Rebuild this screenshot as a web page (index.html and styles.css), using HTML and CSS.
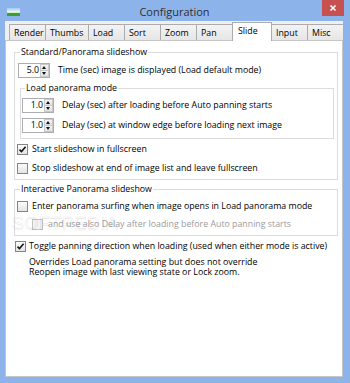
FILE: index.html
```html
<!DOCTYPE html>
<html lang="en">
<head>
  <meta charset="UTF-8" />
  <title>Configuration</title>
  <link rel="stylesheet" href="styles.css">
</head>
<body>

  <div class="window">

    <div class="titlebar">
      <span class="app-icon">
        <svg width="13" height="8" viewBox="0 0 13 8">
          <defs>
            <linearGradient id="sky" x1="0" y1="0" x2="0" y2="1">
              <stop offset="0" stop-color="#9fcbef"/>
              <stop offset="1" stop-color="#eef7fd"/>
            </linearGradient>
          </defs>
          <rect x="0" y="0" width="13" height="4" fill="url(#sky)"/>
          <rect x="0" y="4" width="13" height="1" fill="#d9eecf"/>
          <rect x="0" y="5" width="13" height="3" fill="#3f9f2c"/>
        </svg>
      </span>
      <span class="title">Configuration</span>
      <span class="close">
        <svg width="22" height="16" viewBox="0 0 22 16">
          <path d="M8.5 5.5 L13.5 10.5 M13.5 5.5 L8.5 10.5" stroke="#fff" stroke-width="1.6" fill="none"/>
        </svg>
      </span>
    </div>

    <div class="client">
      <ul class="tabs">
        <li class="tab">Render</li>
        <li class="tab tab-wide">Thumbs</li>
        <li class="tab">Load</li>
        <li class="tab">Sort</li>
        <li class="tab">Zoom</li>
        <li class="tab">Pan</li>
        <li class="tab active">Slide</li>
        <li class="tab">Input</li>
        <li class="tab">Misc</li>
      </ul>

      <div class="page">

        <fieldset class="group">
          <legend>Standard/Panorama slideshow</legend>
          <div class="spin-row">
            <span class="spin"><span class="spin-val">5.0</span><span class="spin-btns"><i class="up"></i><i class="down"></i></span></span>
            <span>Time (sec) image is displayed (Load default mode)</span>
          </div>

          <fieldset class="group inner">
            <legend>Load panorama mode</legend>
            <div class="spin-row">
              <span class="spin"><span class="spin-val">1.0</span><span class="spin-btns"><i class="up"></i><i class="down"></i></span></span>
              <span>Delay (sec) after loading before Auto panning starts</span>
            </div>
            <div class="spin-row next">
              <span class="spin"><span class="spin-val">1.0</span><span class="spin-btns"><i class="up"></i><i class="down"></i></span></span>
              <span>Delay (sec) at window edge before loading next image</span>
            </div>
          </fieldset>

          <div class="check first checked">
            <span class="box"><svg width="9" height="9" viewBox="0 0 9 9"><path d="M1.5 4.6 L3.5 6.6 L7.6 1.8" stroke="#111" stroke-width="1.5" fill="none"/></svg></span>
            <span>Start slideshow in fullscreen</span>
          </div>
          <div class="check second">
            <span class="box"></span>
            <span>Stop slideshow at end of image list and leave fullscreen</span>
          </div>
        </fieldset>

        <fieldset class="group interactive">
          <legend>Interactive Panorama slideshow</legend>
          <div class="check">
            <span class="box"></span>
            <span>Enter panorama surfing when image opens in Load panorama mode</span>
          </div>
          <div class="check sub disabled">
            <span class="box"></span>
            <span>and use also Delay after loading before Auto panning starts</span>
          </div>
        </fieldset>

        <div class="check toggle">
          <span class="box"><svg width="9" height="9" viewBox="0 0 9 9"><path d="M1.5 4.6 L3.5 6.6 L7.6 1.8" stroke="#111" stroke-width="1.5" fill="none"/></svg></span>
          <span>Toggle panning direction when loading (used when either mode is active)</span>
        </div>
        <p class="note">Overrides Load panorama setting but does not override<br>Reopen image with last viewing state or Lock zoom.</p>

        <div class="watermark">SOFTPEDIA</div>
      </div>
    </div>

  </div>

</body>
</html>
```

FILE: styles.css
```css
* {
  margin: 0;
  padding: 0;
  box-sizing: border-box;
}

body {
  width: 350px;
  height: 383px;
  overflow: hidden;
  background: #8cb4ea;
  font-family: 'Open Sans', 'Noto Sans', sans-serif;
  font-size: 8.8px;
  line-height: 11px;
  color: #000;
}

.window {
  height: 383px;
  display: flex;
  flex-direction: column;
  padding: 0 7px 6px 5px;
}

/* title bar */
.titlebar {
  height: 21px;
  display: grid;
  grid-template-columns: 1fr auto 1fr;
  align-items: start;
  margin-right: -1px;
}

.app-icon {
  margin: 8px 0 0 2px;
  height: 8px;
  display: flex;
}

.title {
  font-size: 11px;
  line-height: 21px;
  padding-top: 1px;
  color: #2f2f2f;
}

.close {
  justify-self: end;
  width: 22px;
  height: 16px;
  background: #c75050;
  display: flex;
}

/* client & tabs */
.client {
  flex: 1;
  display: flex;
  flex-direction: column;
  background: #f0f0f0;
}

.tabs {
  list-style: none;
  display: flex;
  align-items: flex-end;
  height: 20px;
  padding-left: 4px;
  margin-bottom: -1px;
  position: relative;
  z-index: 1;
}

.tab {
  width: 37px;
  height: 16px;
  margin: 0 -1px 1px 0;
  padding: 1px 0 0 4px;
  line-height: 14px;
  border: 1px solid #acacac;
  border-bottom: none;
  background: linear-gradient(#f3f3f3, #e6e6e6);
}

.tab-wide {
  width: 44px;
}

.tab.active {
  width: 40px;
  height: 19px;
  margin-bottom: 0;
  padding-left: 5px;
  background: #fff;
  position: relative;
  z-index: 2;
}

.page {
  flex: 1;
  position: relative;
  background: #fff;
  border: 1px solid #c6c6c6;
  padding: 6px 4px 0 8px;
}

/* group boxes */
.group {
  border: 1px solid #dcdcdc;
  padding: 5px 1px 4px 2px;
  min-width: 0;
}

.group legend {
  margin-left: 3px;
  padding: 0 1px;
  line-height: 11px;
}

.group.inner {
  margin: 5px 2px 0 3px;
  padding: 4px 0 5px 1px;
}

.group.interactive {
  margin-top: 4px;
}

.spin-row {
  display: flex;
  align-items: center;
  gap: 8px;
  height: 15px;
  margin-left: 1px;
  white-space: nowrap;
}

.inner .spin-row {
  margin-left: 0;
}

.spin-row.next {
  margin-top: 5px;
}

.spin {
  width: 32px;
  height: 15px;
  display: flex;
  border: 1px solid #abadb3;
  background: #fff;
}

.spin-val {
  flex: 1;
  text-align: right;
  padding-right: 1px;
  line-height: 13px;
}

.spin-btns {
  width: 9px;
  display: flex;
  flex-direction: column;
}

.spin-btns i {
  flex: 1;
  position: relative;
  border: 1px solid #c9c9c9;
  background: linear-gradient(#f4f4f4, #e2e2e2);
}

.spin-btns i + i {
  border-top: none;
}

.spin-btns i::after {
  content: "";
  position: absolute;
  left: 1px;
  top: 1px;
  border-left: 2.5px solid transparent;
  border-right: 2.5px solid transparent;
}

.spin-btns .up::after {
  border-bottom: 3px solid #111;
}

.spin-btns .down::after {
  top: 1px;
  border-top: 3px solid #111;
}

/* checkboxes */
.check {
  display: flex;
  align-items: center;
  gap: 4px;
  height: 13px;
  white-space: nowrap;
}

.check .box {
  width: 11px;
  height: 11px;
  flex: none;
  display: flex;
  align-items: center;
  justify-content: center;
  border: 1px solid #858585;
  background: linear-gradient(#fbfbfb, #e4e4e4);
}

.check.first {
  margin-top: 4px;
}

.check.second {
  margin-top: 6px;
}

.check.sub {
  margin: 5px 0 0 15px;
  gap: 5px;
}

.check.disabled {
  color: #9b9b9b;
}

.check.disabled .box {
  border-color: #c3c3c3;
  background: #f3f3f3;
}

.check.toggle {
  margin: 4px 0 0 1px;
  gap: 3px;
}

.note {
  margin: 4px 0 0 15px;
  line-height: 10px;
}

.watermark {
  position: absolute;
  left: 6px;
  top: 173px;
  font-family: 'Liberation Sans', sans-serif;
  font-size: 18px;
  line-height: 20px;
  letter-spacing: 0.5px;
  color: transparent;
  -webkit-text-stroke: 0.6px rgba(0, 0, 0, 0.12);
  pointer-events: none;
}
```
